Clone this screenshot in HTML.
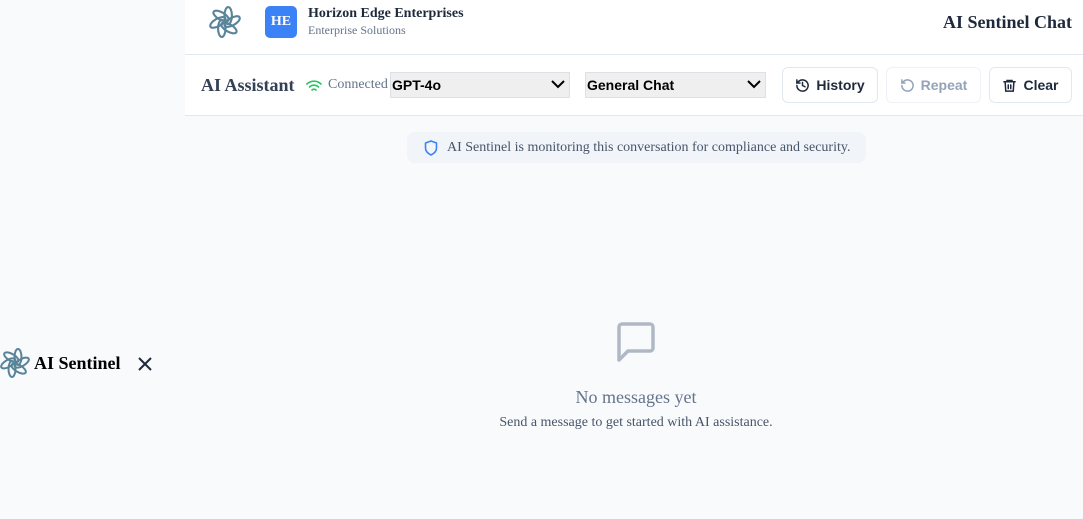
<!DOCTYPE html>
<html><head><meta charset="utf-8"><style>
*{box-sizing:border-box;margin:0;padding:0}
body{width:1083px;height:519px;overflow:hidden;background:#f8fafc;font-family:"Liberation Serif",serif;position:relative}
.side{position:absolute;left:0;top:0;width:185px;height:519px;background:#f8fafc}
.hdr{position:absolute;left:185px;top:0;width:898px;height:55px;background:#fff;border-bottom:1px solid #e2e8f0}
.tb{position:absolute;left:185px;top:55px;width:898px;height:61px;background:#fff;border-bottom:1px solid #e2e8f0}
.abs{position:absolute}
.sel{position:absolute;top:17px;height:26px;background:#efefef;border:1px solid #dde1e6;font:bold 14px "Liberation Sans",sans-serif;color:#000;padding:4px 1px}
.btn{position:absolute;top:12px;height:36px;border:1px solid #e2e8f0;border-radius:6px;background:#fff;font:bold 14px "Liberation Sans",sans-serif;color:#1e293b;display:flex;align-items:center;justify-content:center;gap:6px}
</style></head><body>
<div class="side">
 <svg class="abs" style="left:0;top:348px" width="30" height="30" viewBox="0 0 30 30"><g fill="none" stroke="#3d6f88" stroke-width="2" opacity=".85"><g transform="translate(15 15)"><ellipse rx="3.5" ry="8" cx="3" cy="-6"/><ellipse rx="3.5" ry="8" cx="3" cy="-6" transform="rotate(60)"/><ellipse rx="3.5" ry="8" cx="3" cy="-6" transform="rotate(120)"/><ellipse rx="3.5" ry="8" cx="3" cy="-6" transform="rotate(180)"/><ellipse rx="3.5" ry="8" cx="3" cy="-6" transform="rotate(240)"/><ellipse rx="3.5" ry="8" cx="3" cy="-6" transform="rotate(300)"/></g></g></svg>
 <div class="abs" style="left:34px;top:353px;font-weight:bold;font-size:18px;color:#000">AI Sentinel</div>
 <svg class="abs" style="left:137px;top:356px" width="16" height="16" viewBox="0 0 16 16"><path d="M2 2L14 14M14 2L2 14" stroke="#1e293b" stroke-width="2"/></svg>
</div>
<div class="hdr">
 <svg class="abs" style="left:24px;top:6px" width="32" height="32" viewBox="0 0 30 30"><g fill="none" stroke="#3d6f88" stroke-width="2" opacity=".85"><g transform="translate(15 15)"><ellipse rx="3.5" ry="8" cx="3" cy="-6"/><ellipse rx="3.5" ry="8" cx="3" cy="-6" transform="rotate(60)"/><ellipse rx="3.5" ry="8" cx="3" cy="-6" transform="rotate(120)"/><ellipse rx="3.5" ry="8" cx="3" cy="-6" transform="rotate(180)"/><ellipse rx="3.5" ry="8" cx="3" cy="-6" transform="rotate(240)"/><ellipse rx="3.5" ry="8" cx="3" cy="-6" transform="rotate(300)"/></g></g></svg>
 <div class="abs" style="left:80px;top:6px;width:32px;height:32px;background:#3b82f6;border-radius:5px;color:#fff;font-weight:bold;font-size:14px;text-align:center;line-height:32px">HE</div>
 <div class="abs" style="left:123px;top:6px;font-weight:bold;font-size:14px;color:#1e293b">Horizon Edge Enterprises</div>
 <div class="abs" style="left:123px;top:23px;font-size:12px;color:#64748b">Enterprise Solutions</div>
 <div class="abs" style="right:11px;top:12px;font-weight:bold;font-size:18px;color:#1e293b">AI Sentinel Chat</div>
</div>
<div class="tb">
 <div class="abs" style="left:16px;top:20px;font-weight:bold;font-size:18px;color:#334155">AI Assistant</div>
 <svg class="abs" style="left:121px;top:24px" width="16" height="14" viewBox="0 0 16 14"><g fill="none" stroke="#22c55e" stroke-width="1.6" stroke-linecap="round"><path d="M1 5a10 10 0 0 1 14 0"/><path d="M3.5 8a6.5 6.5 0 0 1 9 0"/><path d="M6 11a3 3 0 0 1 4 0"/></g></svg>
 <div class="abs" style="left:143px;top:22px;font-size:14px;color:#64748b">Connected</div>
 <div class="sel" style="left:205px;width:180px">GPT-4o<svg class="abs" style="right:4px;top:6px" width="14" height="10" viewBox="0 0 14 10"><path d="M1 2l6 6 6-6" fill="none" stroke="#000" stroke-width="2"/></svg></div>
 <div class="sel" style="left:400px;width:181px">General Chat<svg class="abs" style="right:4px;top:6px" width="14" height="10" viewBox="0 0 14 10"><path d="M1 2l6 6 6-6" fill="none" stroke="#000" stroke-width="2"/></svg></div>
 <div class="btn" style="left:597px;width:96px"><svg width="15" height="15" viewBox="0 0 24 24" fill="none" stroke="#1e293b" stroke-width="2.4" stroke-linecap="round"><path d="M3 12a9 9 0 1 0 3-6.7L3 8"/><path d="M3 3v5h5"/><path d="M12 7v5l4 2"/></svg>History</div>
 <div class="btn" style="left:701px;width:95px;color:#94a3b8;border-color:#eef1f5"><svg width="15" height="15" viewBox="0 0 24 24" fill="none" stroke="#94a3b8" stroke-width="2.4" stroke-linecap="round"><path d="M3 12a9 9 0 1 0 3-6.7L3 8"/><path d="M3 3v5h5"/></svg>Repeat</div>
 <div class="btn" style="left:804px;width:83px"><svg width="15" height="15" viewBox="0 0 24 24" fill="none" stroke="#1e293b" stroke-width="2.4" stroke-linecap="round"><path d="M3 6h18M8 6V4h8v2M5 6l1 15h12l1-15M10 11v6M14 11v6"/></svg>Clear</div>
</div>
<div class="abs" style="left:407px;top:132px;width:459px;height:31px;background:#f1f5f9;border-radius:8px"></div>
<svg class="abs" style="left:424px;top:140px" width="14" height="16" viewBox="0 0 14 16"><path d="M7 1L1.5 3v5c0 3.5 2.5 5.5 5.5 7 3-1.5 5.5-3.5 5.5-7V3z" fill="none" stroke="#3b82f6" stroke-width="1.6" stroke-linejoin="round"/></svg>
<div class="abs" style="left:447px;top:140px;font-size:14px;color:#475569">AI Sentinel is monitoring this conversation for compliance and security.</div>
<svg class="abs" style="left:615px;top:321px" width="42" height="42" viewBox="0 0 42 42"><path d="M4 6a3 3 0 0 1 3-3h28a3 3 0 0 1 3 3v21a3 3 0 0 1-3 3H13l-9 9z" fill="none" stroke="#b0b8c6" stroke-width="3.5" stroke-linejoin="round"/></svg>
<div class="abs" style="left:0;width:1272px;top:387px;text-align:center;font-size:18px;color:#64748b">No messages yet</div>
<div class="abs" style="left:0;width:1272px;top:415px;text-align:center;font-size:14px;color:#475569">Send a message to get started with AI assistance.</div>
</body></html>
